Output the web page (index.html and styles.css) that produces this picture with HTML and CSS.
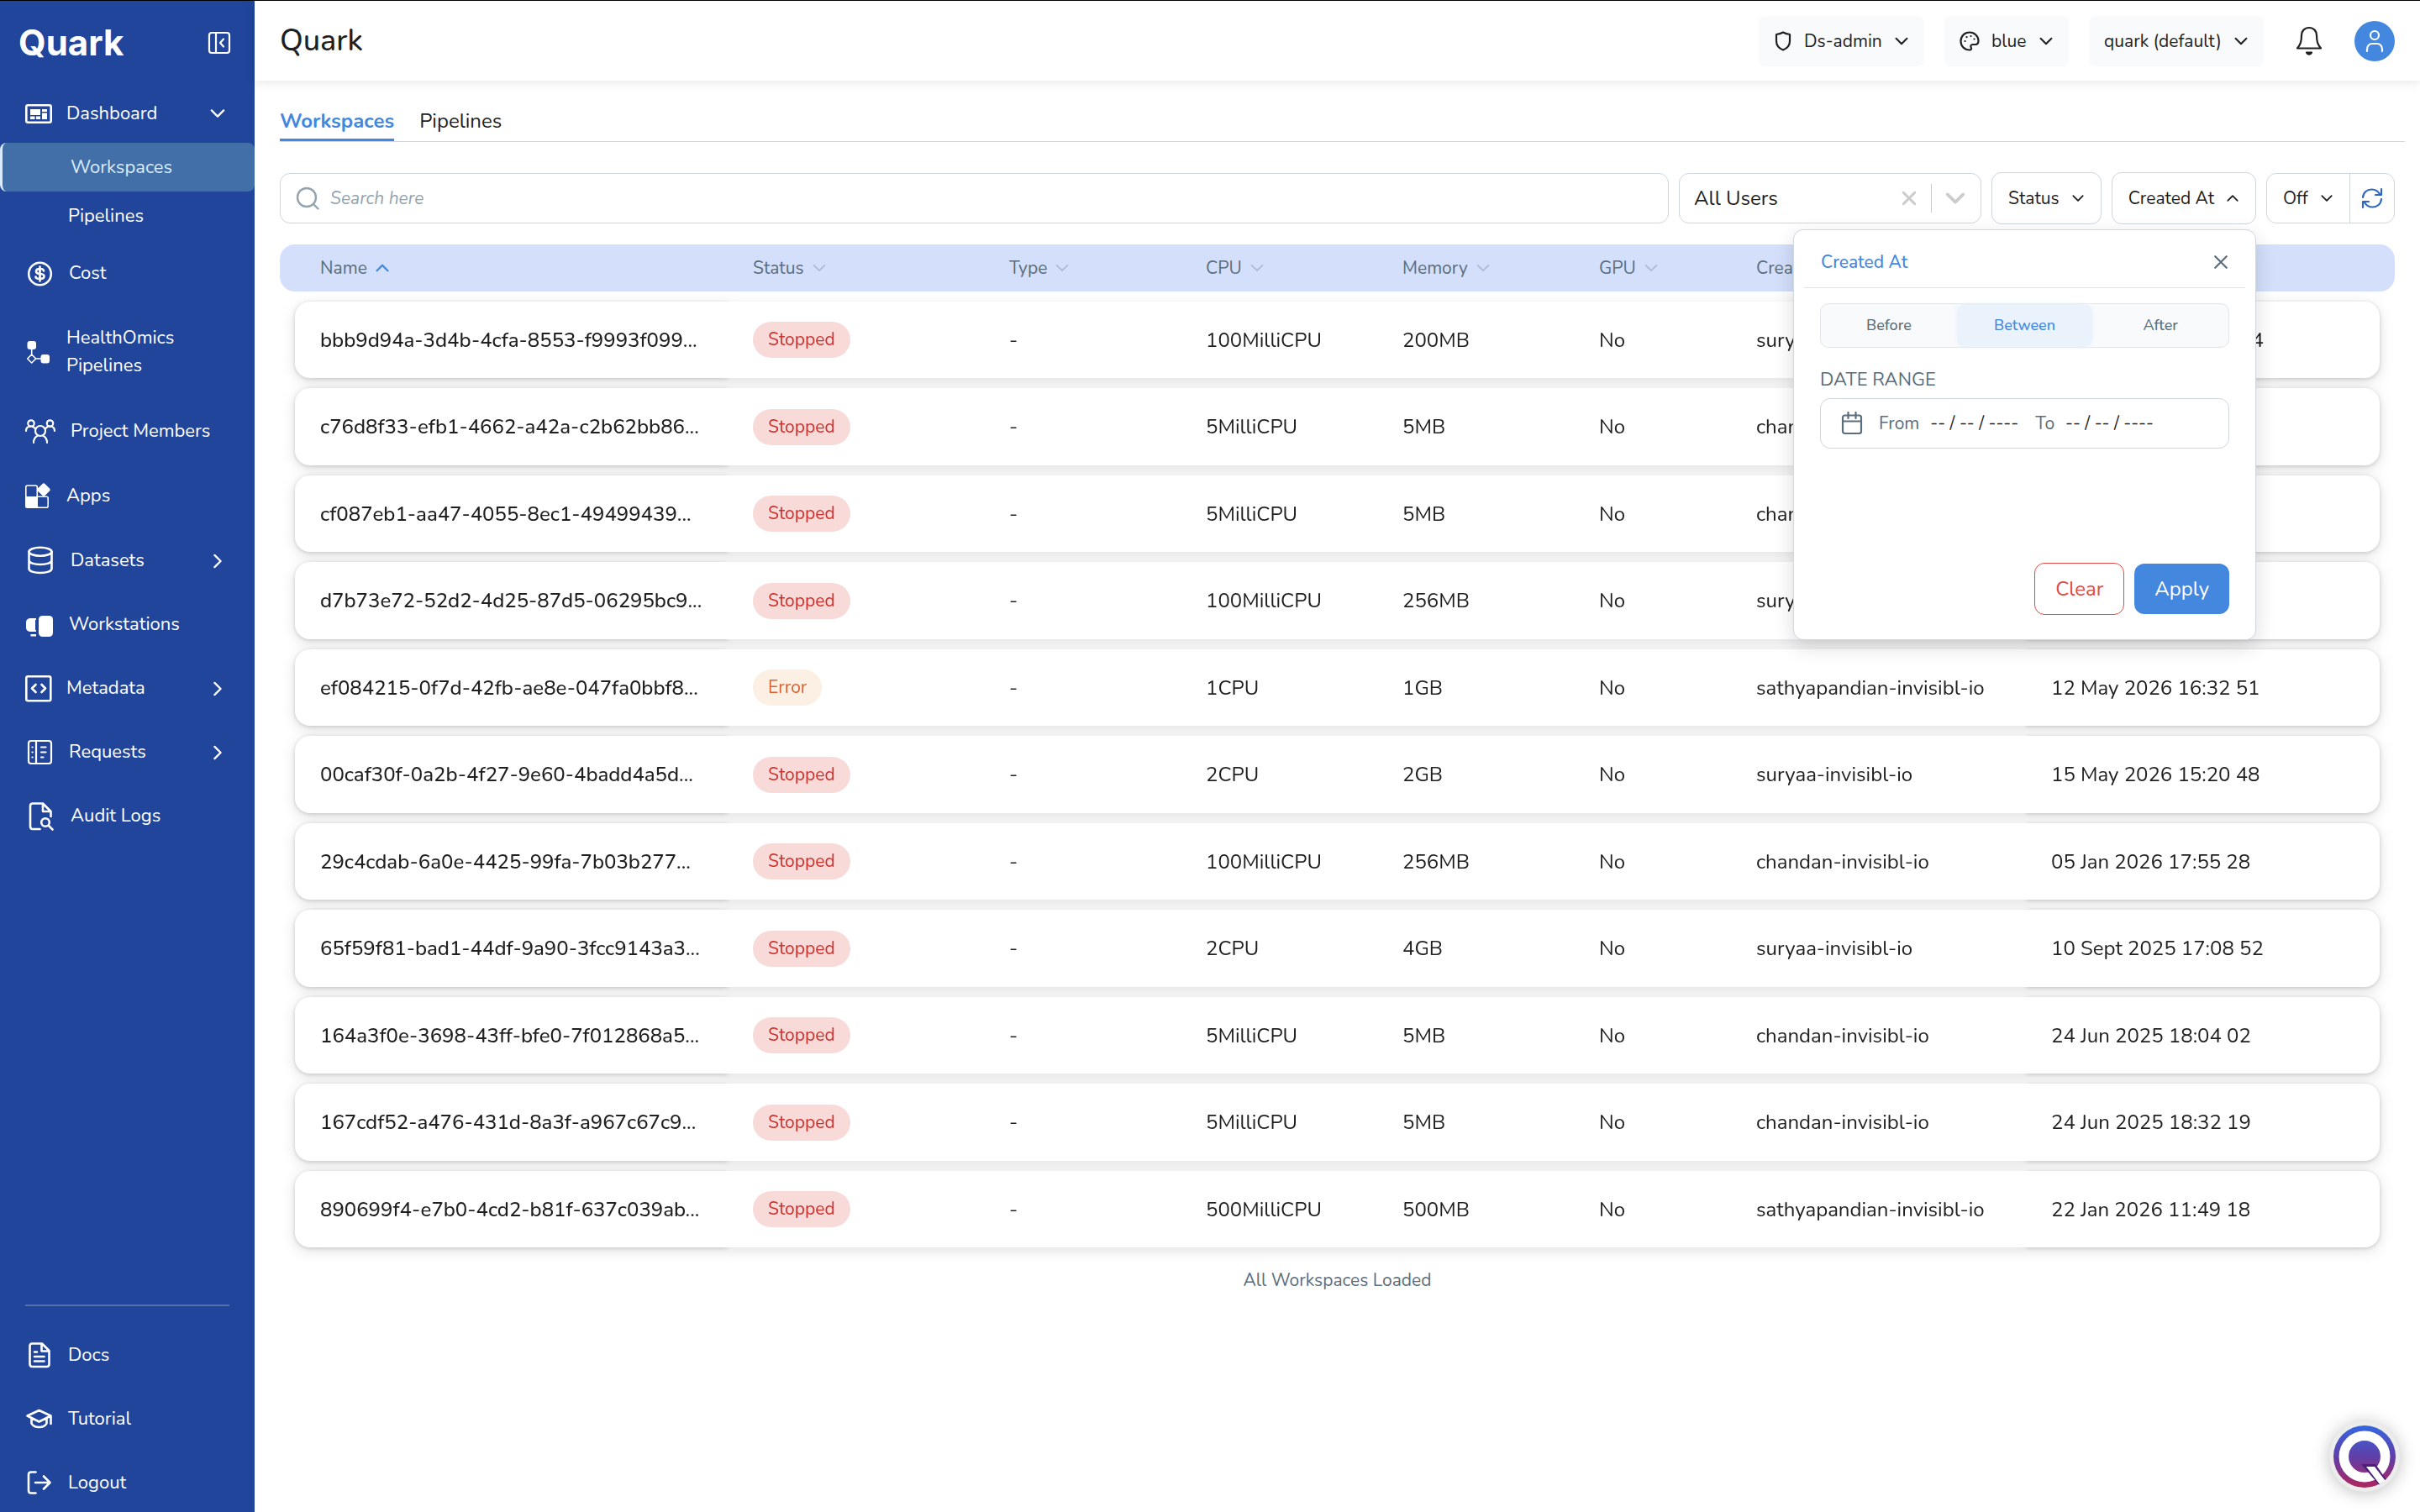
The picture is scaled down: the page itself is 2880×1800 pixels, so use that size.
FILE: index.html
```html
<!DOCTYPE html>
<html lang="en">
<head>
    <meta charset="UTF-8">
    <meta name="viewport" content="width=device-width, initial-scale=1.0">
    <title>Quark</title>
    <link rel="stylesheet" href="styles.css">
</head>
<body>
    <!-- Shared icons -->
    <svg class="sprite" aria-hidden="true">
        <symbol id="chevron" viewBox="0 0 14 14"><path d="M2 4.500l5 5 5-5"/></symbol>
        <symbol id="cross" viewBox="0 0 16 16"><path d="M2 2l12 12M14 2L2 14"/></symbol>
    </svg>

    <div class="app">
        <!-- Sidebar -->
        <aside class="sidebar">
            <div class="brand">
                <span class="brand-name">Quark</span>
                <button class="icon-button" aria-label="Collapse sidebar">
                    <svg width="28" height="28" viewBox="0 0 28 28" class="line thin"><rect x="2" y="2" width="24" height="24" rx="3"/><path d="M10 2v24M19 9.500l-4 4.500 4 4.500"/></svg>
                </button>
            </div>

            <nav class="nav">
                <a class="nav-item nav-parent" href="#">
                    <svg width="32" height="36" viewBox="0 0 32 36"><rect x="1.300" y="8.300" width="29.400" height="20.400" rx="2" fill="none" stroke="#fff" stroke-width="2.600"/><path fill="#fff" d="M6 13h12v7H6zM20 13h6v3h-6zM20 17.500h6V25h-6zM6 21.500h5.500V25H6zM13 21.500h5V25h-5z"/></svg>
                    <span>Dashboard</span>
                    <svg class="arrow down" width="20" height="20"><use href="#chevron"/></svg>
                </a>
                <div class="submenu">
                    <a class="sub-item active" href="#">Workspaces</a>
                    <a class="sub-item" href="#">Pipelines</a>
                </div>
                <a class="nav-item" href="#">
                    <svg width="35" height="35" viewBox="0 0 35 35" class="line"><circle cx="17.500" cy="18" r="13.300"/><path d="M22 14.500c0-1.800-1.500-2.500-4.500-2.500s-4.500.8-4.500 3 1.500 2.800 4.500 3 5 .8 5 3-2 3-5 3-5-.7-5-2.500M17.500 9.500v17"/></svg>
                    <span>Cost</span>
                </a>
                <a class="nav-item tall" href="#">
                    <svg width="32" height="36" viewBox="0 0 32 36"><rect x="2.500" y="5" width="10.500" height="10" rx="3" fill="#fff"/><rect x="18.500" y="21" width="10.500" height="10.500" rx="3" fill="#fff"/><path d="M7.700 15v6l-5 5 5 5 5-5-5-5M12.700 26h6" fill="none" stroke="#fff" stroke-width="1.600"/></svg>
                    <span>HealthOmics Pipelines</span>
                </a>
                <a class="nav-item" href="#">
                    <svg width="37" height="37" viewBox="0 0 37 37" class="line thin"><circle cx="18" cy="18" r="6"/><circle cx="7" cy="9" r="3.700"/><circle cx="29.500" cy="9" r="3.700"/><path d="M1 18c0-3.500 2.500-5.500 6-5.500 2 0 3.500.8 5 3M35 18c0-3.500-2.500-5.500-6-5.500-2 0-3.500.8-5 3M10 32c0-4 2-7 5-8.500M26 32c0-4-2-7-5-8.500"/></svg>
                    <span>Project Members</span>
                </a>
                <a class="nav-item" href="#">
                    <svg width="32" height="37" viewBox="0 0 32 37"><rect x=".8" y="6" width="13.500" height="14" rx="2" fill="none" stroke="#fff" stroke-width="1.600"/><rect x="14" y="19.200" width="13.200" height="13" rx="2" fill="none" stroke="#fff" stroke-width="1.600"/><path fill="#fff" d="M0 19h15v14H2a2 2 0 0 1-2-2z"/><rect x="16" y="5" width="12" height="12" rx="2" transform="rotate(45 22 11)" fill="#fff"/></svg>
                    <span>Apps</span>
                </a>
                <a class="nav-item" href="#">
                    <svg width="37" height="37" viewBox="0 0 37 37" class="line"><ellipse cx="18" cy="7.800" rx="13.500" ry="5"/><path d="M4.500 8v20c0 3 6 5 13.500 5s13.500-2 13.500-5V8M4.500 18c0 3 6 5 13.500 5s13.500-2 13.500-5"/></svg>
                    <span>Datasets</span>
                    <svg class="arrow" width="20" height="20"><use href="#chevron"/></svg>
                </a>
                <a class="nav-item" href="#">
                    <svg width="35" height="35" viewBox="0 0 35 35"><path fill="#fff" d="M7 10h6v2h-1v12h1v2H7c-4 0-6-2-6-5v-6c0-3 2-5 6-5zM6.500 29H13v2.500H6.500z"/><rect x="16" y="7" width="17" height="25" rx="4.500" fill="#fff"/></svg>
                    <span>Workstations</span>
                </a>
                <a class="nav-item" href="#">
                    <svg width="32" height="37" viewBox="0 0 32 37" class="line"><rect x="1.300" y="4.300" width="29" height="29" rx="2"/><path d="M12.500 14L8 18.500l4.500 4.500M19.500 14l4.500 4.500-4.500 4.500"/></svg>
                    <span>Metadata</span>
                    <svg class="arrow" width="20" height="20"><use href="#chevron"/></svg>
                </a>
                <a class="nav-item" href="#">
                    <svg width="35" height="35" viewBox="0 0 35 35" class="line thin"><rect x="4" y="4" width="27" height="27" rx="3"/><path d="M13 4v27M19 11.500h5.500M19 17.500h5.500M19 23.500h2.500M8.500 11.500h.2M8.500 17.500h.2M8.500 23.500h.2"/></svg>
                    <span>Requests</span>
                    <svg class="arrow" width="20" height="20"><use href="#chevron"/></svg>
                </a>
                <a class="nav-item" href="#">
                    <svg width="37" height="37" viewBox="0 0 37 37" class="line"><path d="M17.500 34H9c-2 0-3-1-3-3V6.500c0-2 1-3 3-3h12L30.500 13v6M21 4v9h9"/><circle cx="24" cy="26" r="4.800"/><path d="M28 30l4.500 4.500"/></svg>
                    <span>Audit Logs</span>
                </a>
            </nav>

            <div class="nav-bottom">
                <a class="nav-item" href="#">
                    <svg width="34" height="36" viewBox="0 0 34 36" class="line"><path d="M8 4.500h12l8.500 8.500v16c0 2-.8 3-3 3H8.500c-2 0-3-1-3-3v-21.500c0-2 .8-3 2.500-3zM19.500 5v8.500h8.500M11 14.500h3M11 20h11.500M11 25.500h11.500"/></svg>
                    <span>Docs</span>
                </a>
                <a class="nav-item" href="#">
                    <svg width="34" height="36" viewBox="0 0 34 36" class="line"><path d="M2.500 14.500L16.500 8l14 6.500-14 7zM7.500 17.500v6c1.500 3 5 4.500 9 4.500s7.500-1.500 9-4.500v-6M30.500 14.500V24"/></svg>
                    <span>Tutorial</span>
                </a>
                <a class="nav-item" href="#">
                    <svg width="34" height="36" viewBox="0 0 34 36" class="line"><path d="M12.500 5.500H7c-2 0-3 1-3 3v19c0 2 1 3 3 3h5.500M12 18h17.500M22 10.500l7.500 7.500-7.500 7.500"/></svg>
                    <span>Logout</span>
                </a>
            </div>
        </aside>

        <div class="page">
            <!-- Top bar -->
            <header class="topbar">
                <h1>Quark</h1>
                <div class="topbar-actions">
                    <label class="pill">
                        <svg width="22" height="24" viewBox="0 0 22 24" class="line dark"><path d="M11 1.500c2.500 1.500 5 2.300 8 2.500v8c0 5.500-3 8.500-8 10.500-5-2-8-5-8-10.500V4c3-.2 5.500-1 8-2.500z"/></svg>
                        <select aria-label="Role"><option>Ds-admin</option></select>
                        <svg class="caret"><use href="#chevron"/></svg>
                    </label>
                    <label class="pill">
                        <svg width="24" height="24" viewBox="0 0 24 24" class="line dark"><path d="M12 1.500C6 1.500 1.500 6 1.500 12S6 22.500 12 22.500c2 0 2.500-1.500 1.700-3-.9-1.800 0-3.500 2-3.500h3c2.500 0 3.800-2 3.800-4.500 0-5.500-4.700-10-10.500-10z"/><path d="M6.500 12h.1M8.500 7.200h.1M13.500 6h.1M17.500 9.500h.1"/></svg>
                        <select aria-label="Theme"><option>blue</option></select>
                        <svg class="caret"><use href="#chevron"/></svg>
                    </label>
                    <label class="pill">
                        <select aria-label="Project"><option>quark (default)</option></select>
                        <svg class="caret"><use href="#chevron"/></svg>
                    </label>
                    <button class="icon-button bell" aria-label="Notifications">
                        <svg width="32" height="36" viewBox="0 0 32 36" class="line dark"><path d="M16 2c-5.500 0-9 4-9 9 0 8-1.500 11-5 15.500h28C26.500 22 25 19 25 11c0-5-3.500-9-9-9z"/><path d="M13 31.500c1.500 3 4.500 3 6 0z" fill="#1f1f1f"/></svg>
                    </button>
                    <button class="icon-button avatar" aria-label="Account">
                        <svg width="24" height="28" viewBox="0 0 24 28" class="line thin"><circle cx="12" cy="7" r="5"/><path d="M3 26v-2.500C3 19.500 6 17 9 17h6c3 0 6 2.500 6 6.500V26"/></svg>
                    </button>
                </div>
            </header>

            <main class="content">
                <div class="tabs">
                    <a class="tab active" href="#">Workspaces</a>
                    <a class="tab" href="#">Pipelines</a>
                </div>

                <!-- Filters -->
                <div class="filters">
                    <label class="search">
                        <svg width="28" height="28" viewBox="0 0 28 28"><circle cx="13" cy="13" r="11"/><path d="M21 21l5.500 5.500"/></svg>
                        <input type="search" placeholder="Search here" aria-label="Search">
                    </label>
                    <div class="user-select">
                        <select aria-label="Users"><option>All Users</option></select>
                        <button class="icon-button clear-user" aria-label="Clear users"><svg width="18" height="18"><use href="#cross"/></svg></button>
                        <span class="divider"></span>
                        <svg class="user-caret" width="26" height="26"><use href="#chevron"/></svg>
                    </div>
                    <button class="filter-button">Status <svg class="caret"><use href="#chevron"/></svg></button>
                    <div class="popover-anchor">
                        <button class="filter-button" aria-expanded="true">Created At <svg class="caret up"><use href="#chevron"/></svg></button>

                        <!-- Created At popover -->
                        <form class="popover">
                            <div class="popover-head">
                                <h2>Created At</h2>
                                <button type="button" class="icon-button close" aria-label="Close"><svg width="18" height="18"><use href="#cross"/></svg></button>
                            </div>
                            <div class="popover-body">
                                <div class="segments" role="radiogroup" aria-label="Created At">
                                    <label><input type="radio" name="mode"><span>Before</span></label>
                                    <label><input type="radio" name="mode" checked><span>Between</span></label>
                                    <label><input type="radio" name="mode"><span>After</span></label>
                                </div>
                                <div class="range-title">DATE RANGE</div>
                                <div class="range">
                                    <svg width="26" height="28" viewBox="0 0 26 28"><rect x="2" y="4.500" width="22" height="21.500" rx="2.500"/><path d="M2 11.500h22M8.500 1v7M17.500 1v7"/></svg>
                                    <label for="from">From</label>
                                    <input id="from" type="text" value="-- / -- / ----">
                                    <label for="to">To</label>
                                    <input id="to" type="text" value="-- / -- / ----">
                                </div>
                                <div class="popover-actions">
                                    <button type="button" class="btn-clear">Clear</button>
                                    <button type="button" class="btn-apply">Apply</button>
                                </div>
                            </div>
                        </form>
                    </div>
                    <div class="refresh">
                        <label><select aria-label="Auto refresh"><option>Off</option></select> <svg class="caret"><use href="#chevron"/></svg></label>
                        <button class="icon-button" aria-label="Refresh">
                            <svg width="28" height="28" viewBox="0 0 28 28"><path d="M3 13C3.500 7 8 3.500 13.500 3.500c4 0 7.500 2 9.500 5.500M25 3v7h-7M25 15c-.5 6-5 9.500-10.500 9.500-4 0-7.500-2-9.500-5.500M3 25v-7h7"/></svg>
                        </button>
                    </div>
                </div>

                <!-- Workspaces table -->
                <table class="table">
                    <thead>
                        <tr>
                            <th>Name <svg class="sorted" width="18" height="18"><use href="#chevron"/></svg></th>
                            <th>Status <svg width="18" height="18"><use href="#chevron"/></svg></th>
                            <th>Type <svg width="18" height="18"><use href="#chevron"/></svg></th>
                            <th>CPU <svg width="18" height="18"><use href="#chevron"/></svg></th>
                            <th>Memory <svg width="18" height="18"><use href="#chevron"/></svg></th>
                            <th>GPU <svg width="18" height="18"><use href="#chevron"/></svg></th>
                            <th>Created By</th>
                            <th></th>
                        </tr>
                    </thead>
                    <tbody>
                        <tr><td>bbb9d94a-3d4b-4cfa-8553-f9993f099...</td><td><span class="badge">Stopped</span></td><td>-</td><td>100MilliCPU</td><td>200MB</td><td>No</td><td>suryaa-invisibl-io</td><td>10 Sept 2025 17:06 14</td></tr>
                        <tr><td>c76d8f33-efb1-4662-a42a-c2b62bb86...</td><td><span class="badge">Stopped</span></td><td>-</td><td>5MilliCPU</td><td>5MB</td><td>No</td><td>chandan-invisibl-io</td><td></td></tr>
                        <tr><td>cf087eb1-aa47-4055-8ec1-49499439...</td><td><span class="badge">Stopped</span></td><td>-</td><td>5MilliCPU</td><td>5MB</td><td>No</td><td>chandan-invisibl-io</td><td></td></tr>
                        <tr><td>d7b73e72-52d2-4d25-87d5-06295bc9...</td><td><span class="badge">Stopped</span></td><td>-</td><td>100MilliCPU</td><td>256MB</td><td>No</td><td>suryaa-invisibl-io</td><td></td></tr>
                        <tr><td>ef084215-0f7d-42fb-ae8e-047fa0bbf8...</td><td><span class="badge error">Error</span></td><td>-</td><td>1CPU</td><td>1GB</td><td>No</td><td>sathyapandian-invisibl-io</td><td>12 May 2026 16:32 51</td></tr>
                        <tr><td>00caf30f-0a2b-4f27-9e60-4badd4a5d...</td><td><span class="badge">Stopped</span></td><td>-</td><td>2CPU</td><td>2GB</td><td>No</td><td>suryaa-invisibl-io</td><td>15 May 2026 15:20 48</td></tr>
                        <tr><td>29c4cdab-6a0e-4425-99fa-7b03b277...</td><td><span class="badge">Stopped</span></td><td>-</td><td>100MilliCPU</td><td>256MB</td><td>No</td><td>chandan-invisibl-io</td><td>05 Jan 2026 17:55 28</td></tr>
                        <tr><td>65f59f81-bad1-44df-9a90-3fcc9143a3...</td><td><span class="badge">Stopped</span></td><td>-</td><td>2CPU</td><td>4GB</td><td>No</td><td>suryaa-invisibl-io</td><td>10 Sept 2025 17:08 52</td></tr>
                        <tr><td>164a3f0e-3698-43ff-bfe0-7f012868a5...</td><td><span class="badge">Stopped</span></td><td>-</td><td>5MilliCPU</td><td>5MB</td><td>No</td><td>chandan-invisibl-io</td><td>24 Jun 2025 18:04 02</td></tr>
                        <tr><td>167cdf52-a476-431d-8a3f-a967c67c9...</td><td><span class="badge">Stopped</span></td><td>-</td><td>5MilliCPU</td><td>5MB</td><td>No</td><td>chandan-invisibl-io</td><td>24 Jun 2025 18:32 19</td></tr>
                        <tr><td>890699f4-e7b0-4cd2-b81f-637c039ab...</td><td><span class="badge">Stopped</span></td><td>-</td><td>500MilliCPU</td><td>500MB</td><td>No</td><td>sathyapandian-invisibl-io</td><td>22 Jan 2026 11:49 18</td></tr>
                    </tbody>
                </table>
                <p class="loaded">All Workspaces Loaded</p>
            </main>
        </div>
    </div>

    <!-- Assistant button -->
    <button class="assistant" aria-label="Open assistant">
        <svg width="74" height="74" viewBox="0 0 74 74">
            <defs><linearGradient id="q" x1="0" y1="0" x2="0" y2="1"><stop offset="0" stop-color="#3566e0"/><stop offset=".5" stop-color="#5f3fa8"/><stop offset="1" stop-color="#b0245f"/></linearGradient></defs>
            <circle cx="37" cy="37" r="37" fill="url(#q)"/>
            <circle cx="37" cy="37" r="24.700" fill="none" stroke="#fff" stroke-width="11.500"/>
            <path d="M33 46h17l12.500 18-8.500 6.500z" fill="#4c1d7a"/>
            <path d="M39 49h10l12.500 16.500-6.500 4.500z" fill="#fff"/>
        </svg>
    </button>
</body>
</html>
```

FILE: styles.css
```css
* {
    box-sizing: border-box;
}

body {
    margin: 0;
    font-family: Nunito, Lato, "Liberation Sans", sans-serif;
    font-size: 24px;
    color: #1f1f1f;
    background: #fff;
}

button, input, select {
    font: inherit;
    color: inherit;
}

button {
    cursor: pointer;
}

select {
    appearance: none;
    padding: 0;
    border: none;
    background: none;
}

a {
    color: inherit;
    text-decoration: none;
}

svg {
    flex: none;
    fill: none;
    stroke-linecap: round;
    stroke-linejoin: round;
}

.sprite {
    position: absolute;
    width: 0;
    height: 0;
}

.line {
    stroke: #fff;
    stroke-width: 2.6;
}

.line.thin {
    stroke-width: 2.2;
}

.line.dark {
    stroke: #1f1f1f;
    stroke-width: 2.2;
}

.icon-button {
    display: flex;
    align-items: center;
    justify-content: center;
    padding: 0;
    border: none;
    background: none;
}

.app {
    display: flex;
    height: 100vh;
    border-top: 1px solid #000;
    overflow: hidden;
}

/* Sidebar */
.sidebar {
    flex: none;
    display: flex;
    flex-direction: column;
    width: 303px;
    background: #20459b;
    color: #fff;
    font-size: 22px;
}

.brand {
    display: flex;
    align-items: center;
    justify-content: space-between;
    height: 99px;
    padding: 0 28px 0 22px;
}

.brand-name {
    font-family: Inter, "Liberation Sans", sans-serif;
    font-size: 42px;
    font-weight: 700;
}

.nav {
    flex: 1;
}

.nav-item {
    display: flex;
    align-items: center;
    gap: 17px;
    padding: 20px 30px;
    line-height: 33px;
}

.nav-parent {
    padding-block: 17px;
}

.nav-item.tall {
    padding-block: 23px;
}

.arrow {
    margin-left: auto;
    margin-right: 4px;
    stroke: #fff;
    stroke-width: 1.6;
    transform: rotate(-90deg);
}

.arrow.down {
    transform: none;
}

.submenu {
    padding-bottom: 2px;
}

.sub-item {
    display: block;
    padding-left: 81px;
    line-height: 58px;
}

.sub-item.active {
    border-left: 3px solid #d9ecff;
    border-radius: 8px;
    background: #426fa8;
    color: #d9ecff;
}

.nav-bottom {
    display: flex;
    flex-direction: column;
    gap: 40px;
    margin: 0 30px;
    padding: 40px 0 17px;
    border-top: 2px solid #5770b1;
}

.nav-bottom .nav-item {
    padding: 0;
}

/* Top bar */
.page {
    flex: 1;
    min-width: 0;
}

.topbar {
    display: flex;
    align-items: center;
    justify-content: space-between;
    height: 95px;
    padding: 0 30px;
    box-shadow: 0 2px 12px rgba(0, 0, 0, 0.1);
}

.topbar h1 {
    margin: 0;
    font-size: 36px;
    font-weight: 500;
    line-height: 48px;
}

.topbar-actions {
    display: flex;
    align-items: center;
    gap: 24px;
    font-size: 21px;
}

.pill {
    display: flex;
    align-items: center;
    gap: 14px;
    height: 60px;
    padding: 0 18px;
    border-radius: 8px;
    background: #f9fafc;
}

.caret {
    width: 18px;
    height: 18px;
    stroke: #1f1f1f;
    stroke-width: 1.6;
}

.caret.up {
    transform: rotate(180deg);
}

.bell {
    margin: 0 14px;
}

.avatar {
    width: 48px;
    height: 48px;
    border-radius: 50%;
    background: #4387df;
}

/* Content */
.content {
    padding: 24px 30px 0;
}

.tabs {
    display: flex;
    gap: 30px;
    margin-right: -12px;
    border-bottom: 1px solid #cfd6de;
}

.tab {
    height: 48px;
    line-height: 48px;
}

.tab.active {
    border-bottom: 3px solid #4387df;
    color: #4387df;
    font-weight: 700;
}

.filters {
    display: flex;
    align-items: center;
    gap: 12px;
    margin-top: 36px;
    font-size: 21px;
}

.filters .caret {
    width: 16px;
    height: 16px;
}

.search {
    flex: 1;
    display: flex;
    align-items: center;
    gap: 13px;
    height: 60px;
    padding: 0 18px;
    border: 1px solid #cfd6de;
    border-radius: 12px;
}

.search svg {
    stroke: #94a3ad;
    stroke-width: 2.4;
}

.search input {
    flex: 1;
    padding: 0;
    border: none;
    outline: none;
    background: none;
}

.search input::placeholder {
    color: #94a3ad;
    font-style: italic;
}

.user-select {
    display: flex;
    align-items: center;
    width: 360px;
    height: 60px;
    padding: 0 17px;
    border: 1px solid #cfd6de;
    border-radius: 12px;
    font-size: 24px;
}

.user-select select {
    flex: 1;
}

.clear-user,
.user-caret {
    stroke: #ccc;
    stroke-width: 2.8;
}

.user-caret {
    stroke-width: 2;
}

.divider {
    width: 1px;
    height: 34px;
    margin: 0 15px 0 17px;
    background: #ccc;
}

.filter-button {
    display: flex;
    align-items: center;
    gap: 14px;
    height: 62px;
    padding: 0 19px;
    border: 1px solid #cfd6de;
    border-radius: 12px;
    background: #fff;
}

.refresh {
    display: flex;
    height: 60px;
    border: 1px solid #cfd6de;
    border-radius: 12px;
}

.refresh label {
    display: flex;
    align-items: center;
    gap: 14px;
    padding: 0 19px;
    border-right: 1px solid #cfd6de;
}

.refresh .icon-button {
    width: 52px;
    stroke: #2f66c4;
    stroke-width: 2.2;
}

/* Created At popover */
.popover-anchor {
    position: relative;
}

.popover {
    position: absolute;
    top: 68px;
    right: 0;
    z-index: 10;
    width: 551px;
    border: 1px solid #cfd6de;
    border-radius: 12px;
    background: #fff;
    box-shadow: 0 8px 24px rgba(0, 0, 0, 0.14);
}

.popover-head {
    display: flex;
    align-items: center;
    justify-content: space-between;
    height: 69px;
    margin: 0 12px;
    padding: 8px 20px 0;
    border-bottom: 1px solid #e1e5ea;
}

.popover-head h2 {
    margin: 0;
    color: #4387df;
    font-size: 21px;
    font-weight: 500;
}

.close {
    stroke: #5a6e7c;
    stroke-width: 2;
}

.popover-body {
    padding: 18px 31px 29px;
}

.segments {
    display: flex;
    height: 53px;
    border: 1px solid #e1e5ea;
    border-radius: 10px;
    background: #f9fafc;
    color: #5a6e7c;
    font-size: 18px;
    font-weight: 500;
}

.segments label {
    flex: 1;
    display: flex;
    position: relative;
}

.segments input {
    position: absolute;
    opacity: 0;
}

.segments span {
    flex: 1;
    border-radius: 10px;
    line-height: 51px;
    text-align: center;
}

.segments input:checked + span {
    background: #eaf2fc;
    color: #4387df;
    box-shadow: 0 0 6px #eaf2fc;
}

.range-title {
    margin: 22px 0 6px;
    color: #5a6e7c;
    font-size: 22px;
    line-height: 32px;
}

.range {
    display: flex;
    align-items: center;
    gap: 13px;
    height: 60px;
    padding: 0 24px;
    border: 1px solid #cfd6de;
    border-radius: 12px;
    color: #5a6e7c;
}

.range svg {
    margin-right: 6px;
    stroke: #5a6e7c;
    stroke-width: 2.2;
}

.range input {
    width: 112px;
    padding: 0;
    border: none;
    outline: none;
    color: #1f1f1f;
}

.popover-actions {
    display: flex;
    align-items: center;
    justify-content: flex-end;
    gap: 12px;
    margin-top: 136px;
    font-size: 24px;
}

.btn-clear {
    height: 62px;
    padding: 0 24px;
    border: 1px solid #e04a45;
    border-radius: 12px;
    background: #fff;
    color: #e04a45;
}

.btn-apply {
    height: 60px;
    padding: 0 24px;
    border: none;
    border-radius: 12px;
    background: #4387df;
    color: #fff;
}

/* Table */
.table {
    display: block;
    margin-top: 24px;
}

.table thead {
    display: block;
    margin-bottom: 12px;
    padding: 0 18px;
    border-radius: 18px;
    background: #d3dffb;
}

.table tbody {
    display: grid;
    gap: 12px;
    margin: 0 18px;
    filter: drop-shadow(0 4px 8px rgba(0, 0, 0, 0.12));
}

.table tr {
    display: grid;
    grid-template-columns: 515fr 305fr 234fr 234fr 234fr 187fr 351fr 421fr;
}

.table th {
    display: flex;
    align-items: center;
    gap: 9px;
    height: 56px;
    padding: 0 30px;
    color: #5a6e7c;
    font-size: 21px;
    font-weight: 400;
    white-space: nowrap;
}

.table th svg {
    stroke: #adbcd6;
    stroke-width: 1.4;
}

.table th .sorted {
    stroke: #4387df;
    stroke-width: 1.8;
    transform: rotate(180deg);
}

.table td {
    display: flex;
    align-items: center;
    position: relative;
    z-index: 1;
    height: 91px;
    padding: 0 0 0 30px;
    background: #fff;
    white-space: nowrap;
}

.table tr:nth-child(even) td {
    height: 92px;
}

.table td:first-child {
    z-index: 0;
    border-radius: 18px 0 0 18px;
    box-shadow: 0 1px 5px rgba(0, 0, 0, 0.16);
    font-weight: 500;
}

.table td:last-child {
    z-index: 0;
    border-radius: 0 18px 18px 0;
    box-shadow: 0 1px 5px rgba(0, 0, 0, 0.16);
}

.badge {
    padding: 0 18px;
    border-radius: 22px;
    background: #f8dad9;
    color: #d0312d;
    font-size: 21px;
    line-height: 43px;
}

.badge.error {
    background: #fcefe4;
    color: #dd6130;
}

.loaded {
    margin: 24px 0 0;
    color: #5a6e7c;
    font-size: 21px;
    line-height: 30px;
    text-align: center;
}

.assistant {
    display: flex;
    position: fixed;
    right: 24px;
    bottom: 24px;
    padding: 5px;
    border: none;
    border-radius: 50%;
    background: #ececec;
    box-shadow: 0 2px 20px rgba(0, 0, 0, 0.25);
}
```
